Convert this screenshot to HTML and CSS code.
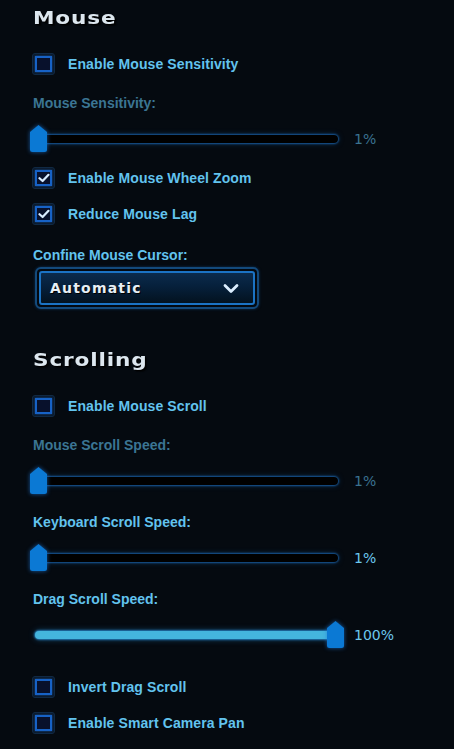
FILE: index.html
```html
<!DOCTYPE html>
<html lang="en">
<head>
<meta charset="utf-8">
<title>Mouse settings</title>
<link rel="stylesheet" href="styles.css">
</head>
<body>
<div class="panel">
  <section class="section">
    <h2 class="heading">Mouse</h2>
    <div class="check first">
      <span class="box"><span class="inner"></span></span>
      <span class="check-label">Enable Mouse Sensitivity</span>
    </div>
    <div class="field after-check dim">
      <div class="field-label">Mouse Sensitivity:</div>
      <div class="slider-row">
        <div class="slider">
          <div class="track"></div>
          <svg class="thumb" style="left:0px" width="17" height="27" viewBox="0 0 17 27"><path d="M8.5 0 L17 7 V24.5 Q17 27 14.5 27 H2.5 Q0 27 0 24.5 V7 Z"/></svg>
        </div>
        <span class="value">1%</span>
      </div>
    </div>
    <div class="check after-slider">
      <span class="box"><span class="inner"><svg class="tick" width="12" height="12" viewBox="0 0 12 12"><path d="M1.5 6.2 L4.6 9 L10.5 2.8"/></svg></span></span>
      <span class="check-label">Enable Mouse Wheel Zoom</span>
    </div>
    <div class="check">
      <span class="box"><span class="inner"><svg class="tick" width="12" height="12" viewBox="0 0 12 12"><path d="M1.5 6.2 L4.6 9 L10.5 2.8"/></svg></span></span>
      <span class="check-label">Reduce Mouse Lag</span>
    </div>
    <div class="field after-check2">
      <div class="field-label">Confine Mouse Cursor:</div>
      <div class="select">
        <div class="select-inner">
          <span class="select-text">Automatic</span>
          <svg class="chev" width="16" height="11" viewBox="0 0 16 11"><path d="M2 2.5 L8 8.5 L14 2.5"/></svg>
        </div>
      </div>
    </div>
  </section>

  <section class="section second">
    <h2 class="heading">Scrolling</h2>
    <div class="check first">
      <span class="box"><span class="inner"></span></span>
      <span class="check-label">Enable Mouse Scroll</span>
    </div>
    <div class="field after-check dim">
      <div class="field-label">Mouse Scroll Speed:</div>
      <div class="slider-row">
        <div class="slider">
          <div class="track"></div>
          <svg class="thumb" style="left:0px" width="17" height="27" viewBox="0 0 17 27"><path d="M8.5 0 L17 7 V24.5 Q17 27 14.5 27 H2.5 Q0 27 0 24.5 V7 Z"/></svg>
        </div>
        <span class="value">1%</span>
      </div>
    </div>
    <div class="field after-field">
      <div class="field-label">Keyboard Scroll Speed:</div>
      <div class="slider-row">
        <div class="slider">
          <div class="track"></div>
          <svg class="thumb" style="left:0px" width="17" height="27" viewBox="0 0 17 27"><path d="M8.5 0 L17 7 V24.5 Q17 27 14.5 27 H2.5 Q0 27 0 24.5 V7 Z"/></svg>
        </div>
        <span class="value">1%</span>
      </div>
    </div>
    <div class="field after-field">
      <div class="field-label">Drag Scroll Speed:</div>
      <div class="slider-row">
        <div class="slider">
          <div class="track full"></div>
          <svg class="thumb" style="left:297px" width="17" height="27" viewBox="0 0 17 27"><path d="M8.5 0 L17 7 V24.5 Q17 27 14.5 27 H2.5 Q0 27 0 24.5 V7 Z"/></svg>
        </div>
        <span class="value">100%</span>
      </div>
    </div>
    <div class="check after-slider2">
      <span class="box"><span class="inner"></span></span>
      <span class="check-label">Invert Drag Scroll</span>
    </div>
    <div class="check">
      <span class="box"><span class="inner"></span></span>
      <span class="check-label">Enable Smart Camera Pan</span>
    </div>
  </section>
</div>
</body>
</html>
```

FILE: styles.css
```css
* { box-sizing: border-box; }
html, body {
  margin: 0;
  padding: 0;
  background: #050a10;
}
body {
  width: 454px;
  height: 749px;
  overflow: hidden;
  font-family: "Liberation Sans", Arial, sans-serif;
}
.panel {
  padding: 8px 0 0 33px;
  display: flex;
  flex-direction: column;
}
.section {
  display: flex;
  flex-direction: column;
  align-items: flex-start;
}
.section.second { margin-top: 41px; }
.heading {
  margin: 0;
  height: 20px;
  line-height: 20px;
  font-family: "DejaVu Sans", sans-serif;
  font-weight: bold;
  font-size: 18px;
  letter-spacing: 0.7px;
  color: #dde7ef;
  text-shadow: 1px 1px 0 #000, 2px 2px 1px rgba(0,0,0,0.6);
  transform: scaleX(1.2);
  transform-origin: left center;
}
.check {
  height: 36px;
  display: flex;
  align-items: center;
  gap: 13px;
}
.check.first { margin-top: 18px; }
.check.after-slider { margin-top: 8px; }
.check.after-slider2 { margin-top: 21px; }
.box {
  width: 23px;
  height: 22px;
  margin-left: -1px;
  border-radius: 3px;
  background: #0b1929;
  border: 1px solid #112a44;
  display: flex;
  align-items: center;
  justify-content: center;
}
.inner {
  width: 17px;
  height: 16px;
  border: 2px solid #1762c6;
  background: #08112c;
  box-shadow: 0 0 2px rgba(30,110,220,0.6);
  display: flex;
  align-items: center;
  justify-content: center;
}
.tick path {
  fill: none;
  stroke: #d8ecff;
  stroke-width: 2.2;
  stroke-linecap: round;
  stroke-linejoin: round;
}
.check-label {
  font-weight: bold;
  font-size: 14px;
  color: #62c3ee;
  letter-spacing: 0.1px;
}
.field {
  display: flex;
  flex-direction: column;
}
.field.after-check { margin-top: 13px; }
.field.after-check2 { margin-top: 15px; }
.field.after-field { margin-top: 20px; }
.field-label {
  height: 16px;
  line-height: 16px;
  font-weight: bold;
  font-size: 14px;
  color: #62c3ee;
}
.field.dim .field-label { color: #3b7593; }
.slider-row {
  margin-top: 14px;
  margin-left: -3px;
  display: flex;
  align-items: center;
  gap: 7px;
}
.slider {
  position: relative;
  width: 317px;
  height: 27px;
  display: flex;
  align-items: center;
}
.track {
  margin-left: 5px;
  width: 303px;
  height: 8px;
  border-radius: 4px;
  background: #000;
  box-shadow: 0 0 2px 1px rgba(28,110,190,0.75), 0 0 6px rgba(28,110,190,0.35);
}
.track.full {
  background: #44b5dd;
  box-shadow: 0 0 2px 1px rgba(40,140,210,0.8), 0 0 7px rgba(40,140,210,0.45);
}
.thumb {
  position: absolute;
  top: 0;
  filter: drop-shadow(0 0 2px rgba(30,120,220,0.7));
}
.thumb path { fill: #0b79d4; }
.value {
  font-family: "DejaVu Sans", sans-serif;
  font-size: 14px;
  color: #6cc7ee;
}
.field.dim .value { color: #3a7290; }
.select {
  margin-top: 4px;
  margin-left: 2px;
  width: 224px;
  height: 42px;
  border: 2px solid #134a7c;
  border-radius: 6px;
  background: #030910;
  padding: 2px;
  box-shadow: 0 0 3px rgba(20,90,160,0.5);
}
.select-inner {
  height: 100%;
  border: 2px solid #1b73c4;
  border-radius: 3px;
  background: linear-gradient(180deg, #0b2b4c 0%, #06203b 45%, #03121f 100%);
  display: flex;
  align-items: center;
  justify-content: space-between;
  padding: 0 14px 0 9px;
}
.select-text {
  font-family: "DejaVu Sans", sans-serif;
  font-weight: bold;
  font-size: 14px;
  letter-spacing: 1.2px;
  color: #e6eff5;
  text-shadow: 1px 1px 0 #000;
}
.chev path {
  fill: none;
  stroke: #dceeff;
  stroke-width: 2.8;
  stroke-linecap: round;
  stroke-linejoin: round;
}
```
